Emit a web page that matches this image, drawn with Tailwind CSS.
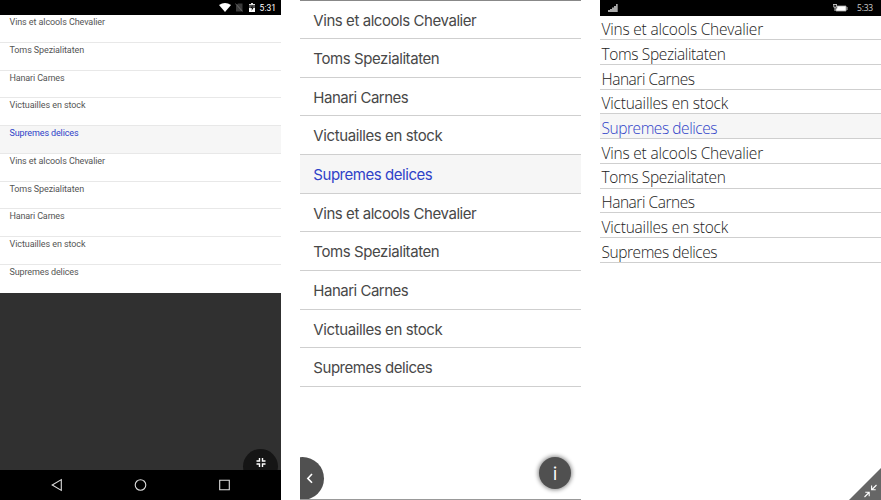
<!DOCTYPE html>
<html lang="en">
<head>
<meta charset="utf-8">
<title>Supplier list</title>
<script src="https://cdn.jsdelivr.net/npm/@tailwindcss/browser@4"></script>
</head>
<body class="bg-white">
<main class="flex w-[881px] h-[500px] gap-[19px] overflow-hidden bg-white">

  <section class="relative flex flex-col w-[281px] h-[500px] shrink-0 bg-[#303030] font-['Roboto',sans-serif]">
    <header class="flex h-[15px] shrink-0 items-center justify-end bg-black pr-[5px] text-white">
      <svg class="w-[12px] h-[9px] mr-[4px]" viewBox="0 0 12 9"><path d="M0 2Q6-2 12 2L6 9Z" fill="#fff"/></svg>
      <svg class="w-[8px] h-[9px] mr-[6px]" viewBox="0 0 8 9"><path d="M3 .5H7.5V8.5H1V2.5Z" fill="#3b3b3b"/><path d="M.3.5L7.7 8.5" stroke="#777" stroke-width=".8"/></svg>
      <svg class="w-[6px] h-[9px] mr-[5px]" viewBox="0 0 6 9"><path d="M0 1H2V0H4V1H6V9H0Z" fill="#555"/><path d="M0 5H6V9H0Z" fill="#fff"/><path d="M3.7 2L1.5 5.3H3L2.5 8L4.7 4.6H3.2Z" fill="#000"/><path d="M0 1H2V0H4V1H6V2H0Z" fill="#ddd"/></svg>
      <span class="pt-[1px] text-[8.5px] leading-[15px]">5:31</span>
    </header>
    <ul id="android" class="h-[277.5px] shrink-0 overflow-hidden bg-white"></ul>
    <div class="flex-1"></div>
    <div class="absolute left-[243px] top-[449px] w-[35px] h-[35px] rounded-full bg-[#151515]">
      <svg class="absolute left-[13px] top-[9px]" width="10" height="9" viewBox="0 0 10 9"><path d="M3.5 0V3H.5M6.5 0V3H9.5M3.5 9V6H.5M6.5 9V6H9.5" fill="none" stroke="#fff" stroke-width="1.4"/></svg>
    </div>
    <footer class="relative flex h-[30px] shrink-0 items-center bg-black">
      <svg class="w-[281px] h-[30px]" viewBox="0 0 281 30" fill="none" stroke="#ddd" stroke-width="1.1"><path d="M61.3 9.6V20.4L52.2 15Z"/><circle cx="140.5" cy="15" r="5.3"/><path d="M219.7 10.2H229.3V19.8H219.7Z"/></svg>
    </footer>
  </section>

  <section class="relative w-[281px] h-[500px] shrink-0 border-y border-t-[#888] border-b-[#999] bg-white font-['Inter',sans-serif] overflow-hidden">
    <ul id="ios" class="-mt-[0.5px]"></ul>
    <div class="absolute left-[-19px] top-[456px] w-[43px] h-[43px] rounded-full bg-[#505050]">
      <svg class="absolute left-[24px] top-[15px]" width="9" height="13" viewBox="0 0 9 13"><path d="M7 2L2.8 6.4L7 10.8" fill="none" stroke="#fff" stroke-width="1.6"/></svg>
    </div>
    <div class="absolute left-[239px] top-[456px] flex w-[32px] h-[32px] items-center justify-center rounded-full bg-[#505050] shadow-[0_0_4px_1px_#0007]">
      <span class="pt-[1px] text-[17px] leading-[32px] text-white">i</span>
    </div>
  </section>

  <section class="relative w-[281px] h-[500px] shrink-0 bg-white font-['Open_Sans',sans-serif]">
    <header class="flex h-[15.5px] items-center bg-black pl-[8px] pr-[8px]">
      <svg width="10" height="8" viewBox="0 0 10 8" fill="#aaa"><path d="M0 6H2V8H0ZM2 5H4V8H2ZM4 3.5H6V8H4ZM6 2H8V8H6ZM8 0H9.7V8H8Z"/></svg>
      <svg class="ml-auto mr-[9px]" width="15" height="8" viewBox="0 0 15 8"><path d="M0 .5H4M.8 0V3.2H3.4V0M2 3V7" fill="none" stroke="#bbb"/><path d="M4 2H13V7H3V4.5H4Z" fill="#fff" stroke="#aaa" stroke-width=".8"/><path d="M14 3V6" stroke="#bbb"/></svg>
      <span class="text-[8.5px] leading-[15px] tracking-[-0.2px] text-[#ccc]">5:33</span>
    </header>
    <ul id="windows"></ul>
    <svg class="absolute right-0 bottom-0" width="32" height="32" viewBox="0 0 32 32"><path d="M32 0V32H0Z" fill="#666"/><path d="M15.5 29L20 24.5M16.3 24.2H20.2V28.2M27.5 17L23 21.5M22.6 17.6V21.7H26.7" fill="none" stroke="#fff" stroke-width="1.1"/></svg>
  </section>
</main>
<script>
const names = ["Vins et alcools Chevalier", "Toms Spezialitaten", "Hanari Carnes", "Victuailles en stock", "Supremes delices"];
const lists = {
  android: {
    row: "h-[27.75px] border-b border-[#e8e8e8] pl-[9.5px] pt-[2px] text-[9px] leading-[11px] whitespace-nowrap last:border-b-0",
    color: " text-[#555]",
    widths: [95.5, 74.5, 55, 76, 69]
  },
  ios: {
    row: "flex h-[38.65px] items-center border-b border-[#cfcfcf] pl-[13.3px] pt-[2.5px] text-[15px] leading-[20px] whitespace-nowrap",
    color: " text-[#484848]",
    widths: [163, 126, 95, 129, 119]
  },
  windows: {
    row: "flex h-[24.72px] items-center border-b border-[#cfcfcf] pl-[1.5px] pt-[3.5px] text-[15.5px] font-light leading-[20px] whitespace-nowrap",
    color: " text-[#222]",
    widths: [161.5, 124, 93, 126.5, 115.5]
  }
};
const labels = [];
for (const [id, list] of Object.entries(lists)) {
  for (let i = 0; i < 10; i++) {
    const row = document.createElement("li");
    row.className = list.row + (i === 4 ? " bg-[#f6f6f6] text-[#2f42c8]" : list.color);
    const label = document.createElement("span");
    label.textContent = names[i % 5];
    row.append(label);
    document.getElementById(id).append(row);
    labels.push([label, list.widths[i % 5]]);
  }
}
// Letter spacing brings each label to its platform's text width.
function fitLabels() {
  for (const [label, width] of labels) {
    label.style.letterSpacing = "0px";
    const spare = width - label.getBoundingClientRect().width;
    label.style.letterSpacing = (spare / label.textContent.length).toFixed(3) + "px";
  }
}
window.addEventListener("load", () => {
  fitLabels();
  requestAnimationFrame(fitLabels);
  setTimeout(fitLabels, 50);
});
</script>
</body>
</html>
